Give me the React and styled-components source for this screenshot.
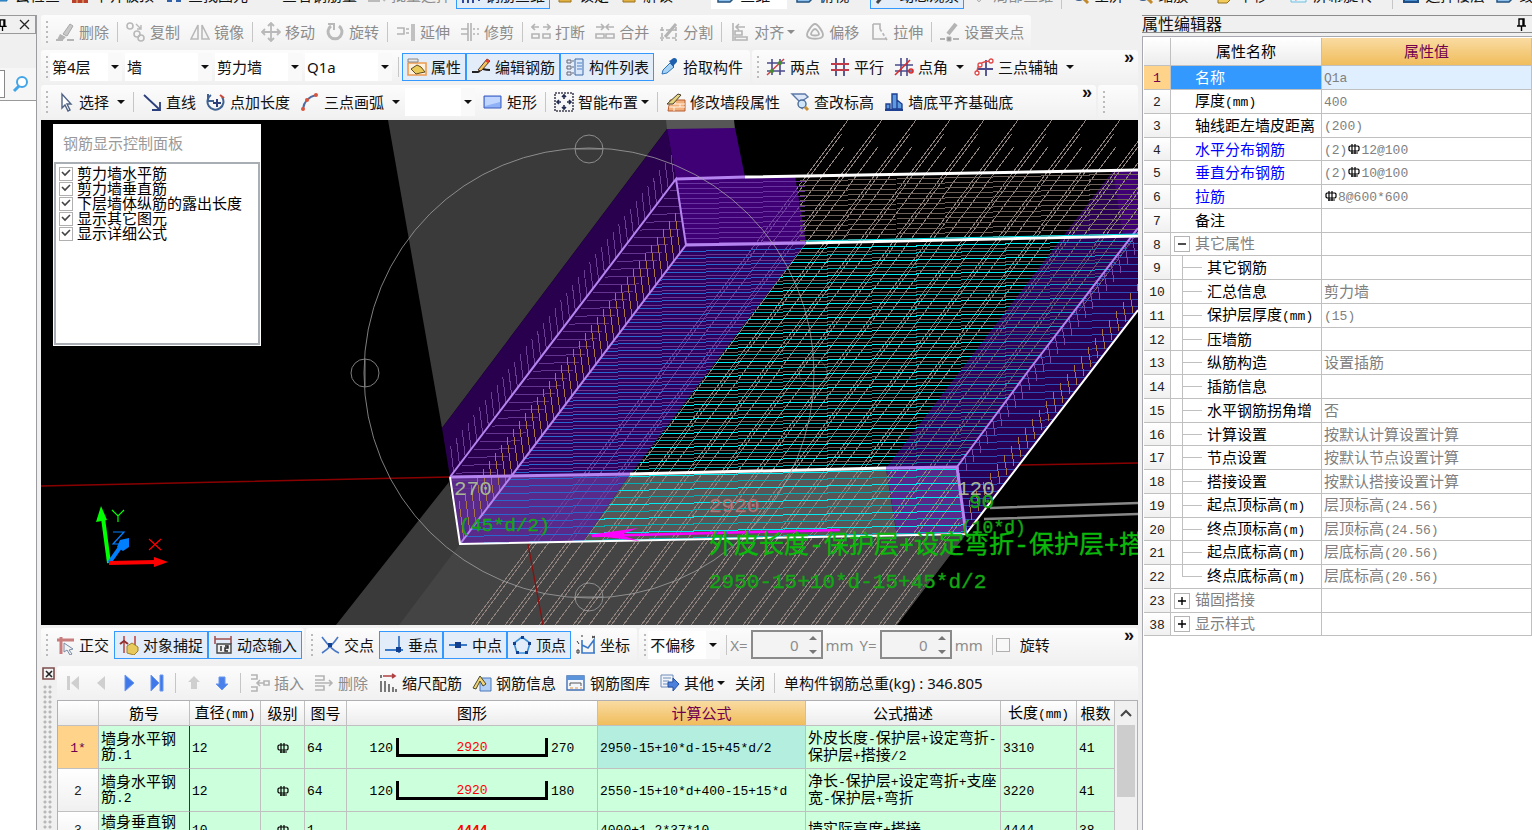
import React from 'react'
import styled, { createGlobalStyle, css } from 'styled-components'

const range = (n) => Array.from({ length: n }, (_, i) => i)

/* ---------- icons ---------- */

const line = { fill: 'none', strokeWidth: 2 }

const icons = {
  none: null,
  blueBox: <path d="M2 4h14v12H2z" fill="#3c9be0" stroke="#1f6fb0" />,
  bricks: <g><path d="M2 2h16v16H2z" fill="#b8402c" /><path d="M2 7h16M2 12h16M7 2v16M13 7v11" stroke="#f0c878" /></g>,
  binoculars: <path d="M3 5h5v12H3zM12 5h5v12h-5zM8 8h4v4H8z" fill="#2f5fa8" />,
  batch: <path d="M2 4h8v12H2zM12 10l6 6M12 10v7M12 10h6" {...line} stroke="#bbb" />,
  rebar3d: <path d="M2 2v16M7 2v16M12 2v16M0 6h16M0 12h16M18 2v14" {...line} stroke="#33489a" />,
  lock: <path d="M4 8h12v9H4z" fill="#e0b040" stroke="#9c7420" />,
  cube: <path d="M2 5l4-3h12v11l-4 4H2z" fill="#8fc1ee" stroke="#23527c" strokeWidth="1.5" />,
  orbit: <g><circle cx="11" cy="8" r="6" fill="#9fd0b8" stroke="#3c8060" /><path d="M2 18l6-7" stroke="#444" strokeWidth="3" /></g>,
  grayCube: <path d="M3 10l7-6 7 6-7 7z" fill="#d8d8d8" stroke="#b4b4b4" />,
  lens: <g><circle cx="9" cy="9" r="6" fill="#bfe0f8" stroke="#3a5c8a" strokeWidth="2" /><path d="M13 13l5 5" stroke="#c08a2c" strokeWidth="3" /></g>,
  hand: <path d="M4 18V9l5-4 8 4v5l-4 4z" fill="#f2cc5c" stroke="#94701c" />,
  spin: <g><path d="M2 2h15v15H2z" fill="#e6f4fb" stroke="#6cc0e0" /><path d="M6 14c7-1 7-5 7-9" stroke="#e23c4c" strokeWidth="3" fill="none" /></g>,
  layers: <path d="M3 3h14v14H3zM3 8h14M3 13h14" fill="#4a8fd0" stroke="#1f4f86" strokeWidth="2" />,

  erase: <g><path d="M8 12l7-10 3 2-6 10z" fill="#c8c8c8" stroke="#a8a8a8" /><path d="M5 12l6 3-3 3H2z" fill="#b4b4b4" /><path d="M1 18h7M12 18h7" stroke="#b5b5b5" strokeWidth="2" /></g>,
  copy: <g fill="none" stroke="#b9b9b9" strokeWidth="1.6"><circle cx="4" cy="4" r="3" /><circle cx="11" cy="12" r="3" /><circle cx="15" cy="16" r="3" /><path d="M10 2l5 5M15 3v4h-4" strokeWidth="1.4" /></g>,
  mirror: <g fill="none" stroke="#b9b9b9" strokeWidth="1.6"><path d="M8 3v14H1zM12 3v14h7z" /></g>,
  move: <path d="M10 1v18M1 10h18M7 4l3-3 3 3M7 16l3 3 3-3M4 7l-3 3 3 3M16 7l3 3-3 3" fill="none" stroke="#b9b9b9" strokeWidth="1.8" />,
  rotate: <g fill="none" stroke="#b9b9b9" strokeWidth="3"><path d="M6 4a7 7 0 1 0 8 0" /><path d="M3 2h6v6" strokeWidth="2" /></g>,
  extend: <g fill="none" stroke="#b4b4b4" strokeWidth="1.6"><path d="M1 6h7v6H1M10 7h3M10 11h3" /><path d="M16 2v17M18 2v17" /></g>,
  trim: <g fill="none" stroke="#b4b4b4" strokeWidth="1.6"><path d="M1 7h7M1 12h7M8 1v18M11 1v18M13 7h2M17 7h2M13 12h2M17 12h2" /></g>,
  breakLine: <g fill="none" stroke="#b4b4b4" strokeWidth="1.6"><path d="M1 12h7v4H1zM12 12h7v4h-7zM1 5h7M12 5h7M4 2L1 5l3 3M16 2l3 3-3 3" /></g>,
  join: <g fill="none" stroke="#b4b4b4" strokeWidth="1.6"><path d="M1 12h8v4H1zM11 12h8v4h-8zM1 5h7M12 5h7M6 2l3 3-3 3M14 2l-3 3 3 3" /></g>,
  split: <g fill="none" stroke="#b4b4b4" strokeWidth="1.6"><path d="M1 8h18M1 16h18M3 5v14M17 5v14" strokeDasharray="4 2" /><path d="M6 15L17 2" strokeWidth="3" /></g>,
  align: <g fill="none" stroke="#b4b4b4" strokeWidth="1.6"><path d="M3 1v18M6 5h9M9 2L6 5l3 3M5 9h7v4H5zM5 15h12v3H5z" /></g>,
  offset: <g fill="none" stroke="#b4b4b4" strokeWidth="1.8"><path d="M10 2c3 0 8 8 8 11 0 5-16 5-16 0C2 10 7 2 10 2z" /><path d="M10 7c2 0 4 4 4 5 0 2-8 2-8 0 0-1 2-5 4-5z" /></g>,
  stretch: <g fill="none" stroke="#b4b4b4" strokeWidth="1.6"><path d="M4 2h7v5M4 2v15h13" /><path d="M11 7l7 11" strokeDasharray="3 2" /></g>,
  grip: <g stroke="#b4b4b4"><path d="M8 12l8-10" strokeWidth="4" /><path d="M0 17h5M13 17h6" strokeWidth="2" /><path d="M7 15h4v4H7z" fill="#999" /></g>,

  props: <g><path d="M1 6h18v12H1z" fill="#fff0dc" stroke="#ee9c50" strokeWidth="1.6" /><path d="M1 2h10v3H1z" fill="#e9e9e9" stroke="#888" /><path d="M4 12l6-4 4 2 4 5-5 1-4 1z" fill="#eacb5a" stroke="#5c4a20" /></g>,
  editRebar: <g><path d="M1 15h6c2 0 2-4 5-3s4 1 7 1" {...line} stroke="#222" /><path d="M7 13l9-11 3 2-9 10z" fill="#f4c45a" stroke="#55382c" /><path d="M15 3l3 2" stroke="#e04030" strokeWidth="3" /></g>,
  list: <g><path d="M10 2h8v16h-8z" fill="#d8e8fa" stroke="#3c68a8" /><path d="M12 6h5M12 9h5M12 12h5" stroke="#4f81c4" /><path d="M2 3h4v3H2zM2 9h4v3H2zM2 15h4v3H2zM7 4h2M7 10h2M7 16h2" fill="none" stroke="#667" /></g>,
  dropper: <g><path d="M3 17l1-4 7-7 4 4-7 6z" fill="#a6d2f6" stroke="#3074b8" /><path d="M10 4l2-1 1-1c3-3 7 1 4 4l-2 2v3z" fill="#1e5fae" /></g>,
  twoPoint: <g><path d="M6 2v16M14 2v16M1 6h18M1 14h18" stroke="#4a4a8c" strokeWidth="1.6" /><path d="M1 18L18 2" stroke="#d04040" strokeWidth="1.5" /><circle cx="6" cy="14" r="2" fill="#3f8f2f" /><circle cx="14" cy="6" r="2" fill="#3f8f2f" /></g>,
  parallel: <g><path d="M6 1v18M14 1v18" stroke="#4a4a8c" strokeWidth="1.8" /><path d="M1 7h18M1 13h18" stroke="#c03a4a" strokeWidth="1.8" /></g>,
  angle: <g><path d="M7 1v18M13 1v18M1 8h18M1 14h18" stroke="#4a4a8c" strokeWidth="1.6" /><path d="M1 18L16 3" stroke="#d82c2c" strokeWidth="1.6" /><circle cx="17" cy="14" r="2" fill="none" stroke="#d82c2c" strokeWidth="1.6" /></g>,
  axis3: <g><path d="M12 3v16M4 12h15" stroke="#4a4a8c" strokeWidth="1.8" /><path d="M3 16c0-8 4-12 15-12" fill="none" stroke="#e04848" strokeWidth="1.6" /><g fill="#fff" stroke="#e04848" strokeWidth="1.3"><circle cx="3" cy="16" r="2" /><circle cx="6" cy="8" r="2" /><circle cx="17" cy="4" r="2" /></g></g>,

  pointer: <path d="M7 2v14l3-3 3 6 2-1-3-6h4z" fill="#fff" stroke="#4f6484" strokeWidth="1.4" />,
  lineTool: <g stroke="#2b3f7c" strokeWidth="1.8" fill="none"><path d="M2 3l15 14" /><path d="M18 10v8h-8" /></g>,
  pointLen: <g fill="none" strokeWidth="2"><path d="M5 3a8 8 0 1 0 11 2" stroke="#3f6292" /><path d="M2 2v7h6" stroke="#3f6292" /><path d="M11 7v8M7 11h8" stroke="#2c3f7c" /><path d="M14 3l4 3" stroke="#c84a3c" /></g>,
  arc: <g><path d="M3 17C4 9 8 5 16 3" fill="none" stroke="#4f6ca0" strokeWidth="2" /><circle cx="3" cy="17" r="2" fill="#d8543c" /><circle cx="7" cy="8" r="2" fill="#d8543c" /><circle cx="16" cy="3" r="2" fill="#d8543c" /></g>,
  rect: <g><path d="M1 4h17v12H1z" fill="#8fb2f6" stroke="#3c5ac0" /><path d="M2 5h15v5L2 14z" fill="#c0d6ff" /></g>,
  smart: <g><path d="M1 1h18v18H1z" fill="none" stroke="#445" strokeDasharray="2 1" strokeWidth="1.6" /><path d="M10 3v4M10 13v4M3 10h4M13 10h4M8 5l2-2 2 2M8 15l2 2 2-2M5 8l-2 2 2 2M15 8l2 2-2 2" fill="none" stroke="#222b50" strokeWidth="1.6" /></g>,
  wallProps: <g><path d="M4 8h15v11H2z" fill="#f2b07c" stroke="#b85c30" /><path d="M3 12h16M3 15h16M9 8v4M14 12v3M8 15v4" stroke="#fff3e4" /><path d="M1 12L12 2l3 1-8 9z" fill="#e4d480" stroke="#4a4030" /></g>,
  checkElev: <g><path d="M2 2h13l3 3-6 4v7l-3-3V9z" fill="#dce8f8" stroke="#5c78a8" strokeWidth="1.4" /><circle cx="12" cy="12" r="4" fill="#cfe6f8" stroke="#4c6c98" strokeWidth="1.4" /><path d="M15 15l3 3" stroke="#c89030" strokeWidth="3" /></g>,
  wallBase: <g><path d="M8 2h5v15H8zM2 12h4v5H2zM13 8l5 4v5h-5z" fill="#5d9ae0" stroke="#1f3f90" strokeWidth="1.4" /><path d="M1 18h18" stroke="#1f3f90" strokeWidth="2" /></g>,

  ortho: <g><path d="M2 5h17M6 2v17" stroke="#c87c7c" strokeWidth="3" /><path d="M9 8l9 6-4 1 3 4-2 1-3-5-3 2z" fill="#f3f3f3" stroke="#788aa4" /></g>,
  snap: <g><path d="M5 1v17M16 1v9" stroke="#c04848" strokeWidth="1.6" /><path d="M1 9l4-3 4 3" fill="none" stroke="#903030" strokeWidth="2" /><path d="M8 18v-7l5-3 6 4v4l-4 4z" fill="#e8c95c" stroke="#9c8030" /></g>,
  dynInput: <g><path d="M2 1v8M18 1v8M2 4h16" stroke="#a05050" strokeWidth="1.6" /><path d="M4 9h14v9H4z" fill="#eee" stroke="#444" strokeWidth="1.4" /><path d="M8 11v5M12 11h3v2h-3v3h3" fill="none" stroke="#222" strokeWidth="1.4" /></g>,
  cross: <g><path d="M2 2c3 4 9 13 17 16M18 2C14 8 8 14 2 18" fill="none" stroke="#4a78c8" strokeWidth="1.6" /><path d="M8 8h4v4H8z" fill="#123f90" /></g>,
  perp: <g><path d="M1 15h18M15 1v17" stroke="#3a78c8" strokeWidth="1.8" /><path d="M12 12h5v5h-5z" fill="#123f90" /></g>,
  middle: <g><path d="M1 10h18" stroke="#3a78c8" strokeWidth="2" /><path d="M7 7h6v6H7z" fill="#123f90" /></g>,
  vertex: <g><path d="M10 2l8 6-3 10H5L2 8z" fill="none" stroke="#3a8ed8" strokeWidth="1.6" /><path d="M9 1h3v3H9zM1 7h3v3H1zM16 7h3v3h-3zM4 16h3v3H4zM13 16h3v3h-3z" fill="#123f90" /></g>,
  coord: <g><path d="M6 5v13h13M6 10l6 3 6-8v13" fill="none" stroke="#3a78c8" strokeWidth="1.6" /><path d="M5 1h2M16 1l3 2M16 3l3-2M1 6l2 3M1 15h2v3H1z" stroke="#333" fill="none" /></g>,

  first: <path d="M4 3h3v14H4zM16 3v14L8 10z" fill="#cfcfcf" />,
  prev: <path d="M14 3v14L6 10z" fill="#cfcfcf" />,
  next: <path d="M6 2v16l9-8z" fill="#3f78e8" stroke="#6c98f0" />,
  last: <path d="M4 2v16l8-8zM13 2h3v16h-3z" fill="#3f78e8" stroke="#6c98f0" />,
  up: <path d="M10 3l6 6h-3v7H7V9H4z" fill="#cfcfcf" />,
  down: <path d="M10 17l6-6h-3V4H7v7H4z" fill="#4a80ea" stroke="#6c98f0" />,
  insert: <g fill="none" stroke="#b4b4b4" strokeWidth="1.6"><path d="M1 2h6v4H1M1 14h6v4H1M8 10h6M10 7l-3 3 3 3M14 8h5v4h-5z" /></g>,
  remove: <g fill="none" stroke="#b4b4b4" strokeWidth="1.6"><path d="M1 3h9v4H1M1 13h9v4H1M1 10h17M15 7l3 3-3 3" /></g>,
  scale: <g fill="none"><path d="M3 2v3M3 8v11M7 8v11M11 11v8M15 14v5M18 16v3" stroke="#444" strokeWidth="1.4" /><path d="M5 3h12M14 1l3 2-3 2" stroke="#b04040" strokeWidth="1.6" /></g>,
  info: <g><path d="M8 5h11v13H8z" fill="#b4d0f4" stroke="#4a78bc" /><path d="M1 15L8 3l6 8-3 2-3-5-4 8z" fill="#f2d470" stroke="#4a4a30" /></g>,
  gallery: <g><path d="M1 3h17v14H1z" fill="#f3f7fd" stroke="#3f6eb4" strokeWidth="1.4" /><path d="M1 3h17v4H1z" fill="#5c94dc" /><path d="M4 13v-3h11v3" fill="none" stroke="#555" /><path d="M4 15h3M9 15h3M14 15h2" stroke="#e09040" /></g>,
  more: <g><path d="M1 2h12v12H1z" fill="#f1f5fb" stroke="#6f8cb8" /><path d="M3 5h8M3 8h6M3 11h5" stroke="#6f8cb8" /><path d="M8 9h5V5l6 6-6 7v-4H8z" fill="#4a80dc" stroke="#2450a4" /></g>,
}

const Glyph = styled.svg`
  width: 20px;
  height: 20px;
  flex: none;
`

const Icon = ({ name }) => <Glyph viewBox="0 0 20 20">{icons[name]}</Glyph>

const CaretSvg = styled.svg`
  width: 8px;
  height: 6px;
  flex: none;
  margin-left: ${(p) => (p.$far ? 8 : 3)}px;
`

const Caret = ({ far }) => (
  <CaretSvg $far={far} viewBox="0 0 8 6">
    <path d="M0 1h8L4 5z" fill="currentColor" />
  </CaretSvg>
)

/* steel grade mark shown in front of bar diameters */
const GradeSvg = styled.svg`
  width: 12px;
  height: 12px;
  margin: 0 1px;
  vertical-align: -1px;
`

const Grade = () => (
  <GradeSvg viewBox="0 0 12 12">
    <path d="M2 3h8l1 1v3l-1 1H2L1 7V4zM4 1v10M7 1v10M3 10h7" fill="none" stroke="#000" strokeWidth="1.2" />
  </GradeSvg>
)

/* ---------- toolbar parts ---------- */

const Tool = styled.button`
  display: flex;
  align-items: center;
  flex: none;
  height: 28px;
  padding: 0 ${(p) => (p.$bare ? 3 : 4)}px;
  border: 1px solid transparent;
  background: transparent;
  font: inherit;
  color: #111;
  white-space: nowrap;
  svg + span {
    margin-left: 4px;
  }
  &:disabled {
    color: #8c8c8c;
  }
  ${(p) =>
    p.$on &&
    css`
      background: #e2edf9;
      border-color: #3399ff;
    `}
`

const ToolButton = ({ icon, label, title, on, disabled, menu, split }) => (
  <Tool type="button" $on={on} $bare={!label} disabled={disabled} aria-label={title} aria-pressed={on}>
    {icon && <Icon name={icon} />}
    {label && <span>{label}</span>}
    {(menu || split) && <Caret far={split} />}
  </Tool>
)

const Bar = styled.div`
  display: flex;
  align-items: center;
  flex: ${(p) => (p.$grow ? '1 1 0' : 'none')};
  min-width: 0;
  height: 33px;
  padding-right: ${(p) => (p.$grow ? 4 : 2)}px;
  border-radius: 3px;
  background: linear-gradient(#fcfcfc, #f1f1f1);
`

const BarRow = styled.div`
  display: flex;
  gap: 2px;
  flex: none;
  margin-bottom: 2px;
`

const Grip = styled.span`
  flex: none;
  width: 2px;
  height: 22px;
  margin: 0 2px 0 5px;
  background: repeating-linear-gradient(#bbb 0 2px, transparent 2px 5px);
`

const Sep = styled.span`
  flex: none;
  width: 1px;
  height: 20px;
  margin: 0 3px;
  background: #c6c6c6;
`

const More = styled.button`
  align-self: flex-start;
  margin-left: auto;
  padding: 0;
  border: none;
  background: none;
  font: bold 18px/14px 'Liberation Sans', sans-serif;
  color: #111;
`

const ComboBox = styled.div`
  display: flex;
  align-items: center;
  flex: none;
  width: ${(p) => p.$width || 87}px;
  height: 28px;
  margin-right: 3px;
  background: #fff;
  select {
    flex: 1;
    min-width: 0;
    height: 28px;
    padding: 0 2px;
    border: none;
    appearance: none;
    background: transparent;
    font: inherit;
    color: #111;
  }
`

const ComboArrow = styled.span`
  display: flex;
  align-items: center;
  width: 14px;
  height: 28px;
  background: #f9f9f9;
  pointer-events: none;
`

const Combo = ({ value, label, width }) => (
  <ComboBox $width={width}>
    <select aria-label={label}>
      <option>{value}</option>
    </select>
    <ComboArrow>
      <Caret />
    </ComboArrow>
  </ComboBox>
)

const Field = styled.label`
  display: flex;
  align-items: center;
  gap: 3px;
  margin-right: 6px;
  color: #8c8c8c;
`

const NumberBox = styled.span`
  display: flex;
  align-items: center;
  width: 72px;
  height: 29px;
  box-sizing: border-box;
  border: 2px solid #8a8a8a;
  background: #f3f3f3;
  input {
    flex: 1;
    min-width: 0;
    padding: 0;
    border: none;
    background: transparent;
    font: inherit;
    color: #8c8c8c;
    text-align: right;
  }
  svg {
    width: 8px;
    height: 20px;
    margin: 0 4px 0 10px;
  }
`

const NumberField = ({ name }) => (
  <Field>
    {name}=
    <NumberBox>
      <input type="text" inputMode="numeric" defaultValue="0" />
      <svg viewBox="0 0 8 20">
        <path d="M0 5l4-4 4 4zM0 15l4 4 4-4z" fill="#777" />
      </svg>
    </NumberBox>
    mm
  </Field>
)

const Check = styled.label`
  display: flex;
  align-items: center;
  gap: 10px;
  color: #111;
  input {
    appearance: none;
    width: 14px;
    height: 14px;
    margin: 0;
    border: 1px solid #b0b0b0;
    background: #f8f8f8;
  }
`

const Total = styled.span`
  padding: 0 5px;
  white-space: nowrap;
`

/* ---------- model view ---------- */

const slant = 0.746
const pts = (list) => list.map((p) => p.join(',')).join(' ')

const wallTop = [676, 179]
const wallRun = [-226, 298]

const diagonals = range(14).flatMap((i) => {
  const x = 848 + i * 34
  return [
    [x, 120],
    [x + 4, 134],
    [x + 16, 147],
  ].map(([x0, y0]) => ({ x1: x0 - (y0 - 120) * slant, y1: y0, x2: x0 - 505 * slant, y2: 625 }))
})

const SceneSvg = styled.svg`
  display: block;
  width: 100%;
  height: 100%;
`

const Scene = () => (
  <SceneSvg viewBox="41 120 1097 505" preserveAspectRatio="xMinYMin slice">
    <defs>
      <clipPath id="leftPart">
        <polygon points={pts([[686, 245], [806, 243], [630, 475], [583, 542], [460, 544]])} />
      </clipPath>
      <clipPath id="midPart">
        <polygon points={pts([[806, 243], [1138, 235], [1029, 370], [957, 467], [966, 534], [583, 542], [630, 475]])} />
      </clipPath>
      <clipPath id="rightPart">
        <polygon points={pts([[1138, 228], [1138, 310], [966, 534], [957, 467]])} />
      </clipPath>
      <clipPath id="backPart">
        <polygon points={pts([[676, 179], [1138, 170], [1138, 236], [686, 245]])} />
      </clipPath>
      <clipPath id="sidePart">
        <polygon points={pts([[676, 179], [686, 245], [460, 544], [450, 477]])} />
      </clipPath>
      <clipPath id="openPart">
        <polygon
          points={pts([[790, 120], [1138, 120], [1138, 236], [957, 467], [960, 534], [897, 625], [400, 625], [460, 544], [583, 542], [630, 475], [806, 243], [795, 176]])}
        />
      </clipPath>
      <clipPath id="tintPart">
        <polygon points={pts([[745, 177], [795, 176], [806, 243], [630, 475], [583, 542], [460, 544]])} />
      </clipPath>
    </defs>

    <rect x="41" y="120" width="1097" height="505" fill="#000" />

    {/* shaded planes */}
    <polygon points={pts([[388, 120], [672, 120], [667, 129], [442, 428]])} fill="#3a3a3a" />
    <polygon points={pts([[666, 120], [734, 120], [735, 129], [667, 129]])} fill="#565656" />
    <polygon points={pts([[449, 482], [460, 544], [966, 534], [897, 625], [336, 625]])} fill="#3a3a3a" />
    <polygon points={pts([[460, 544], [966, 534], [897, 625], [399, 625]])} fill="#444" />

    {/* axis lines */}
    <path d="M41 486L450 477M1020 465L1138 463" stroke="#8a0000" strokeWidth="1.5" />
    <path d="M990 508L1138 503M984 519L1138 514" stroke="#888" strokeWidth="2.5" />

    {/* walls */}
    <polygon points={pts([[667, 129], [676, 179], [450, 477], [442, 428]])} fill="#28004e" />
    <polygon points={pts([[676, 179], [686, 245], [460, 544], [450, 477]])} fill="#28004e" />
    <polygon points={pts([[667, 129], [735, 128], [745, 177], [795, 176], [806, 243], [686, 245], [676, 179]])} fill="#3e0074" />
    <polygon points={pts([[686, 245], [806, 243], [630, 475], [510, 477]])} fill="#2e0060" />
    <polygon points={pts([[1113, 171], [1138, 170], [1138, 310], [966, 534], [957, 467], [886, 468]])} fill="#2a0055" />
    <polygon points={pts([[1113, 171], [1138, 170], [1138, 234], [1123, 236]])} fill="#3e0074" />
    <polygon points={pts([[450, 477], [630, 474], [583, 542], [460, 544]])} fill="#592a8a" />
    <polygon points={pts([[630, 474], [886, 468], [897, 536], [583, 542]])} fill="#575757" />
    <polygon points={pts([[886, 468], [957, 467], [966, 534], [897, 536]])} fill="#592a8a" />

    <g shapeRendering="crispEdges">
      {/* diagonal bars */}
      <g clipPath="url(#openPart)" stroke="#8e807a">
        {diagonals.map((d, i) => (
          <line key={i} {...d} />
        ))}
      </g>
      <g clipPath="url(#tintPart)" stroke="#6a3e98">
        {diagonals.map((d, i) => (
          <line key={i} {...d} />
        ))}
      </g>

      {/* back wall bars */}
      <g clipPath="url(#backPart)">
        {range(13).map((i) => (
          <g key={i}>
            <path d={`M676 ${184 + i * 5}L806 ${181 + i * 5}`} stroke="#6a34a0" />
            <path d={`M800 ${181 + i * 5}L1138 ${174 + i * 5}`} stroke="#6e615a" />
          </g>
        ))}
      </g>

      {/* horizontal bars */}
      <g clipPath="url(#leftPart)">
        {range(42).map((i) => (
          <g key={i}>
            <path d={`M440 ${257 + i * 7}L840 ${248 + i * 7}`} stroke="#2868cc" />
            {i < 31 && <path d={`M440 ${261 + i * 7}L840 ${252 + i * 7}`} stroke="#6a3890" />}
          </g>
        ))}
      </g>
      <g clipPath="url(#midPart)">
        {range(42).map((i) => (
          <g key={i}>
            {i < 31 && <path d={`M560 ${258 + i * 7}L1140 ${245 + i * 7}`} stroke="#6a5c56" />}
            <path d={`M560 ${254 + i * 7}L1140 ${241 + i * 7}`} stroke={i % 2 ? '#00b0b4' : '#00ecf0'} />
          </g>
        ))}
      </g>
      <polygon points={pts([[1064, 236], [1138, 235], [957, 467], [886, 468]])} fill="#32006c" opacity="0.35" />
      <g clipPath="url(#rightPart)">
        {range(48).map((i) => (
          <path key={i} d={`M950 ${240 + i * 7}L1140 ${236 + i * 7}`} stroke="#2a50b8" />
        ))}
        {range(26).map((i) => {
          const x = 972 + i * 7
          const y = 520 - i * 9
          return (
            <g key={i}>
              <path d={`M${x} ${y}l-3 -20`} stroke="#a87448" />
              <path d={`M${x - 12} ${y - 40}l-3 -20`} stroke="#7a4aa8" />
            </g>
          )
        })}
      </g>

      {/* side wall bars */}
      <g clipPath="url(#sidePart)">
        {range(40).map((i) => {
          const x = wallTop[0] + (wallRun[0] * i) / 38
          const y = wallTop[1] + (wallRun[1] * i) / 38
          return <path key={i} d={`M${x} ${y + 4}l40 -1`} stroke="#643490" />
        })}
        {range(40).map((i) => (
          <g key={i}>
            <path d={`M${686 - i * 6} ${245 + i * 8}l-5 -40`} stroke="#a87448" />
            <path d={`M${686 - i * 6} ${245 + i * 8}l-1 -8`} stroke="#2a8ad8" />
          </g>
        ))}
      </g>
      {range(39).map((i) => {
        const x = 674 - i * 5.8
        const y = 181 + i * 7.65
        return <path key={i} d={`M${x} ${y}l-3 -26`} stroke="#6a3c94" />
      })}
    </g>

    {/* edges */}
    <g fill="none" stroke="#b684f0" strokeWidth="2">
      <path d="M450 477L676 179L686 245L460 544" />
      <path d="M676 179L745 177M686 245L806 243M450 477L630 474M886 468L957 467L966 534" strokeWidth="3" />
      <path d="M957 467L1029 370L1138 228" />
    </g>
    <g fill="none" stroke="#fff" strokeWidth="3">
      <path d="M745 177L1138 170M806 243L1138 236M630 474L886 468" />
      <path d="M450 477L460 544L966 534L1138 310" strokeWidth="2" />
    </g>
    <path d="M806 241L1138 234" stroke="#00e4ea" />

    {/* orbit ring */}
    <g fill="none" stroke="#a8a8a8" opacity="0.75">
      <circle cx="589" cy="373" r="225" />
      <circle cx="589" cy="149" r="14" />
      <circle cx="589" cy="597" r="14" />
      <circle cx="365" cy="373" r="14" />
      <circle cx="813" cy="373" r="14" opacity="0.5" />
      <path d="M575 149h28M575 597h28M365 359v28" />
    </g>
    <path d="M528 544L543 625" stroke="#8a1010" strokeWidth="1.3" />

    {/* selected bar */}
    <path d="M592 536L840 530" stroke="#ff00ff" strokeWidth="2.5" />
    <path d="M588 535l50 -7l-18 7l20 6z" fill="#ff00ff" />

    {/* dimension texts */}
    <g fontFamily="'Liberation Mono', monospace" fontSize="21">
      <text x="454" y="495" fill="#a9b894">270</text>
      <text x="957" y="495" fill="#a9b894">120</text>
      <text x="709" y="512" fill="#8f8f8f" stroke="#c05050" strokeWidth="0.5">2920</text>
      <g fill="#14a514" stroke="#14a514" strokeWidth="0.4">
        <text x="459" y="531" fontSize="19">(45*d/2)</text>
        <text x="969" y="508">90</text>
        <text x="961" y="533" fontSize="18">(10*d)</text>
        <text x="709" y="588">2950-15+10*d-15+45*d/2</text>
      </g>
      <text
        x="709"
        y="553"
        fontSize="25"
        fill="#0bb80b"
        stroke="#0bb80b"
        strokeWidth="0.4"
        fontFamily="'Liberation Mono', 'Noto Sans CJK SC', sans-serif"
      >
        外皮长度-保护层+设定弯折-保护层+搭接/2
      </text>
    </g>

    {/* coordinate axes */}
    <g strokeWidth="4">
      <path d="M109 563L103 518" stroke="#0f0" />
      <path d="M101 506l-5 16l11 -2z" fill="#0f0" />
      <path d="M109 563L121 546" stroke="#0080ff" />
      <path d="M129 538l-9 2l-3 7l6 4l6 -4z" fill="#0080ff" />
      <path d="M109 563L156 562" stroke="#f00" />
      <path d="M168 562l-14 -5v10z" fill="#f00" />
    </g>
    <g fill="none" strokeWidth="1.2">
      <path d="M112 510l6 6l6 -6M118 516v6" stroke="#0f0" />
      <path d="M113 532h11l-11 12h11" stroke="#0080ff" />
      <path d="M149 539l12 11M161 539l-12 11" stroke="#f00" />
    </g>
  </SceneSvg>
)

const View = styled.main`
  position: relative;
  flex: 1 1 0;
  min-height: 0;
  overflow: hidden;
  background: #000;
`

const FloatPanel = styled.section`
  position: absolute;
  left: 12px;
  top: 4px;
  display: flex;
  flex-direction: column;
  width: 208px;
  height: 222px;
  box-sizing: border-box;
  padding: 0 1px 1px;
  background: #fff;
  h2 {
    margin: 0;
    padding: 0 9px;
    font-size: 15px;
    font-weight: normal;
    line-height: 38px;
    color: #999;
  }
`

const CheckList = styled.div`
  flex: 1;
  padding: 2px 3px;
  border: 2px solid #a9aeb4;
  line-height: 15px;
  color: #000;
  label {
    display: flex;
    align-items: center;
    gap: 4px;
    height: 15px;
    white-space: nowrap;
  }
  input {
    appearance: none;
    width: 14px;
    height: 14px;
    margin: 0;
    border: 1px solid #b0b0b0;
    background: #fff;
  }
  span {
    margin-left: -18px;
  }
  svg {
    width: 14px;
    height: 14px;
    pointer-events: none;
  }
`

const displayOptions = ['剪力墙水平筋', '剪力墙垂直筋', '下层墙体纵筋的露出长度', '显示其它图元', '显示详细公式']

const DisplayPanel = () => (
  <FloatPanel>
    <h2>钢筋显示控制面板</h2>
    <CheckList>
      {displayOptions.map((text) => (
        <label key={text}>
          <input type="checkbox" defaultChecked />
          <span>
            <svg viewBox="0 0 14 14">
              <path d="M3 6l3 3 5-5" fill="none" stroke="#444" strokeWidth="1.6" />
            </svg>
          </span>
          {text}
        </label>
      ))}
    </CheckList>
  </FloatPanel>
)

/* ---------- tables ---------- */

const Half = styled.span`
  font-family: 'Liberation Mono', monospace;
  font-size: 13px;
`

/* latin parts are set in a half width face; # stands for the steel grade mark */
const Mixed = ({ text }) =>
  text.split(/(#|[\x20-\x22\x24-\x7e]+)/).map((part, i) => {
    if (part === '#') return <Grade key={i} />
    return i % 2 ? <Half key={i}>{part}</Half> : part
  })

const headFill = css`
  background: linear-gradient(#fff, #ececec);
`

const hotFill = css`
  background: linear-gradient(#f9dba2, #f0bd5c);
  color: #700050;
`

const Grid = styled.table`
  width: 100%;
  border-collapse: separate;
  border-spacing: 0;
  table-layout: fixed;
  line-height: 15px;
  th,
  td {
    box-sizing: border-box;
    padding: 0 2px;
    border-right: 1px solid #c0c0c0;
    border-bottom: 1px solid #c0c0c0;
    overflow: hidden;
    white-space: nowrap;
    font-weight: normal;
    text-align: left;
  }
  thead th {
    ${headFill}
    padding: 0;
    text-align: center;
    color: #000;
  }
  thead th.hot {
    ${hotFill}
  }
`

const PropGrid = styled(Grid)`
  thead th {
    height: 28px;
  }
  tbody tr {
    height: 24px;
  }
  tbody tr:nth-child(4n) {
    height: 23px;
  }
  td {
    color: #808080;
  }
  tr.current td {
    background: #e0efff;
  }
`

const RowNo = styled.th`
  && {
    padding: 0;
    text-align: center;
    background: ${(p) => (p.$hot ? '#ffd48a' : 'linear-gradient(#fff, #f0f0f0)')};
    color: ${(p) => (p.$hot ? '#700050' : '#222')};
  }
`

const treeLine = css`
  background-image: linear-gradient(#c0c0c0, #c0c0c0), linear-gradient(#c0c0c0, #c0c0c0);
  background-repeat: no-repeat;
  background-position: 11px 0, 11px 50%;
  background-size: 1px ${(p) => (p.$last ? '50%' : '100%')}, 20px 1px;
`

const NameCell = styled.th`
  && {
    padding: 0 0 0 ${(p) => (p.$kind === 'child' ? 36 : p.$kind ? 3 : 24)}px;
  }
  color: ${(p) => (p.$blue ? '#0000ff' : p.$kind && p.$kind !== 'child' ? '#808080' : '#000')};
  ${(p) => p.$kind === 'child' && treeLine}
  ${(p) =>
    p.$selected &&
    css`
      background: #3399ff;
      color: #fff;
    `}
`

const Toggle = styled.button`
  width: 16px;
  height: 16px;
  margin-right: 5px;
  padding: 0;
  border: 1px solid #b4b4b4;
  background: #fff;
  vertical-align: middle;
  svg {
    display: block;
    width: 14px;
    height: 14px;
  }
`

const properties = [
  { no: 1, name: '名称', value: 'Q1a', selected: true },
  { no: 2, name: '厚度(mm)', value: '400' },
  { no: 3, name: '轴线距左墙皮距离', value: '(200)' },
  { no: 4, name: '水平分布钢筋', value: '(2)#12@100', blue: true },
  { no: 5, name: '垂直分布钢筋', value: '(2)#10@100', blue: true },
  { no: 6, name: '拉筋', value: '#8@600*600', blue: true },
  { no: 7, name: '备注', value: '' },
  { no: 8, name: '其它属性', value: '', kind: 'open' },
  { no: 9, name: '其它钢筋', value: '', kind: 'child' },
  { no: 10, name: '汇总信息', value: '剪力墙', kind: 'child' },
  { no: 11, name: '保护层厚度(mm)', value: '(15)', kind: 'child' },
  { no: 12, name: '压墙筋', value: '', kind: 'child' },
  { no: 13, name: '纵筋构造', value: '设置插筋', kind: 'child' },
  { no: 14, name: '插筋信息', value: '', kind: 'child' },
  { no: 15, name: '水平钢筋拐角增', value: '否', kind: 'child' },
  { no: 16, name: '计算设置', value: '按默认计算设置计算', kind: 'child' },
  { no: 17, name: '节点设置', value: '按默认节点设置计算', kind: 'child' },
  { no: 18, name: '搭接设置', value: '按默认搭接设置计算', kind: 'child' },
  { no: 19, name: '起点顶标高(m)', value: '层顶标高(24.56)', kind: 'child' },
  { no: 20, name: '终点顶标高(m)', value: '层顶标高(24.56)', kind: 'child' },
  { no: 21, name: '起点底标高(m)', value: '层底标高(20.56)', kind: 'child' },
  { no: 22, name: '终点底标高(m)', value: '层底标高(20.56)', kind: 'child', last: true },
  { no: 23, name: '锚固搭接', value: '', kind: 'closed' },
  { no: 38, name: '显示样式', value: '', kind: 'closed' },
]

const Side = styled.aside`
  display: flex;
  flex-direction: column;
  flex: 0 0 390px;
  box-sizing: border-box;
  margin-left: 4px;
`

const SideTitle = styled.header`
  display: flex;
  align-items: center;
  justify-content: space-between;
  height: 16px;
  padding-right: 5px;
  border: solid #8c8c8c;
  border-width: 1px 0;
  h2 {
    margin: 0;
    font-size: 16px;
    font-weight: normal;
    line-height: 16px;
  }
  svg {
    width: 11px;
    height: 14px;
  }
`

const SideBody = styled.div`
  flex: 1;
  margin-top: 3px;
  padding: 1px 0 0 1px;
  border: solid #a8a8b0;
  border-width: 1px 0 0 1px;
  background: #fff;
`

const Pin = () => (
  <svg viewBox="0 0 11 14">
    <path d="M3 2h5v7H3zM7 2v7M1 9h9M5.500 9v5" fill="none" stroke="#000" strokeWidth="1.4" />
  </svg>
)

const PropertyEditor = () => (
  <Side>
    <SideTitle>
      <h2>属性编辑器</h2>
      <Pin />
    </SideTitle>
    <SideBody>
      <PropGrid>
        <colgroup>
          <col width="27" />
          <col width="151" />
          <col />
        </colgroup>
        <thead>
          <tr>
            <th />
            <th>属性名称</th>
            <th className="hot">属性值</th>
          </tr>
        </thead>
        <tbody>
          {properties.map((p) => (
            <tr key={p.no} className={p.selected ? 'current' : undefined}>
              <RowNo $hot={p.selected}>
                <Mixed text={String(p.no)} />
              </RowNo>
              <NameCell $kind={p.kind} $blue={p.blue} $selected={p.selected} $last={p.last}>
                {(p.kind === 'open' || p.kind === 'closed') && (
                  <Toggle type="button" aria-label={p.name}>
                    <svg viewBox="0 0 14 14">
                      <path d={p.kind === 'open' ? 'M3 7h8' : 'M3 7h8M7 3v8'} stroke="#000" strokeWidth="1.4" />
                    </svg>
                  </Toggle>
                )}
                <Mixed text={p.name} />
              </NameCell>
              <td>
                <Mixed text={p.value} />
              </td>
            </tr>
          ))}
        </tbody>
      </PropGrid>
    </SideBody>
  </Side>
)

const BarGrid = styled(Grid)`
  thead th {
    height: 25px;
  }
  tbody tr {
    height: 43px;
  }
  tbody tr:last-child {
    height: 36px;
  }
  td {
    background: #ccffdb;
    color: #000;
  }
  td.name {
    border-right-color: #333;
  }
  td.center {
    text-align: center;
  }
  td.wrap {
    white-space: normal;
  }
  td.hot {
    background: #b4eedf;
  }
`

const Shape = styled.div`
  display: grid;
  grid-template-columns: 1fr 152px 1fr;
  gap: 3px;
  align-items: center;
  span:first-child {
    text-align: right;
  }
`

const Bend = styled.div`
  height: 16px;
  border: 3px solid #000;
  border-top: none;
  color: #f00;
  text-align: center;
`

const Straight = styled.div`
  color: #f00;
  font-weight: bold;
  text-align: center;
`

const bars = [
  { no: '1*', name: '墙身水平钢筋.1', dia: '12', fig: '64', left: '120', mid: '2920', right: '270', formula: '2950-15+10*d-15+45*d/2', desc: '外皮长度-保护层+设定弯折-保护层+搭接/2', len: '3310', count: '41', hot: true },
  { no: '2', name: '墙身水平钢筋.2', dia: '12', fig: '64', left: '120', mid: '2920', right: '180', formula: '2550-15+10*d+400-15+15*d', desc: '净长-保护层+设定弯折+支座宽-保护层+弯折', len: '3220', count: '41' },
  { no: '3', name: '墙身垂直钢筋.1', dia: '10', fig: '1', mid: '4444', formula: '4000+1.2*37*10', desc: '墙实际高度+搭接', len: '4444', count: '38' },
]

const TableArea = styled.div`
  display: flex;
  height: 129px;
  overflow: hidden;
  border: solid #b0b0b4;
  border-width: 1px 1px 0 1px;
  background: #fff;
`

const TableBox = styled.div`
  flex: 1;
  min-width: 0;
`

const ScrollBar = styled.div`
  display: flex;
  flex-direction: column;
  align-items: center;
  flex: 0 0 22px;
  background: #f0f0f0;
  svg {
    width: 12px;
    height: 8px;
    margin: 8px 0;
  }
  span {
    width: 18px;
    height: 72px;
    background: #cdcdcd;
  }
`

const BarTable = () => (
  <TableArea>
    <TableBox>
      <BarGrid>
        <colgroup>
          <col width="41" />
          <col width="91" />
          <col width="71" />
          <col width="44" />
          <col width="42" />
          <col />
          <col width="208" />
          <col width="195" />
          <col width="76" />
          <col width="38" />
        </colgroup>
        <thead>
          <tr>
            <th />
            <th>筋号</th>
            <th><Mixed text="直径(mm)" /></th>
            <th>级别</th>
            <th>图号</th>
            <th>图形</th>
            <th className="hot">计算公式</th>
            <th>公式描述</th>
            <th><Mixed text="长度(mm)" /></th>
            <th>根数</th>
          </tr>
        </thead>
        <tbody>
          {bars.map((b) => (
            <tr key={b.no}>
              <RowNo $hot={b.hot}><Mixed text={b.no} /></RowNo>
              <td className="name wrap"><Mixed text={b.name} /></td>
              <td><Mixed text={b.dia} /></td>
              <td className="center"><Grade /></td>
              <td><Mixed text={b.fig} /></td>
              <td>
                {b.left ? (
                  <Shape>
                    <span><Mixed text={b.left} /></span>
                    <Bend><Mixed text={b.mid} /></Bend>
                    <span><Mixed text={b.right} /></span>
                  </Shape>
                ) : (
                  <Straight><Mixed text={b.mid} /></Straight>
                )}
              </td>
              <td className={b.hot ? 'hot' : undefined}><Mixed text={b.formula} /></td>
              <td className="wrap"><Mixed text={b.desc} /></td>
              <td><Mixed text={b.len} /></td>
              <td><Mixed text={b.count} /></td>
            </tr>
          ))}
        </tbody>
      </BarGrid>
    </TableBox>
    <ScrollBar>
      <svg viewBox="0 0 12 8">
        <path d="M1 7l5-5 5 5" fill="none" stroke="#444" strokeWidth="2" />
      </svg>
      <span />
    </ScrollBar>
  </TableArea>
)

/* ---------- page ---------- */

const GlobalStyle = createGlobalStyle`
  body {
    margin: 0;
    overflow: hidden;
    background: #f0f0f0;
    color: #111;
    font-family: 'Noto Sans', 'Noto Sans CJK SC', sans-serif;
    font-size: 15px;
    line-height: 20px;
  }
`

const Page = styled.div`
  display: flex;
  flex-direction: column;
  height: 100vh;
`

const MainStrip = styled.nav`
  display: flex;
  align-items: flex-end;
  flex: none;
  height: 9px;
  margin: 0 0 6px -14px;
  overflow: hidden;
`

const Space = styled.span`
  flex: none;
  width: ${(p) => p.$w}px;
`

const Work = styled.div`
  display: flex;
  flex: 1;
  min-height: 0;
`

const LeftDock = styled.aside`
  display: flex;
  flex-direction: column;
  flex: 0 0 36px;
  margin-right: 4px;
  border-right: 1px solid #9c9ca0;
`

const DockHead = styled.div`
  display: flex;
  align-items: center;
  justify-content: space-between;
  height: 17px;
  padding: 0 5px 0 0;
  border: 1px solid #999;
  border-left: none;
  svg {
    width: 11px;
    height: 13px;
  }
  svg:first-child {
    margin-left: -3px;
  }
`

const DockSearch = styled.div`
  display: flex;
  align-items: center;
  gap: 6px;
  height: 32px;
  margin-top: 34px;
  background: #f6f6f6;
  input {
    width: 5px;
    height: 28px;
    box-sizing: border-box;
    padding: 0;
    border: 1px solid #888;
    border-left: none;
    background: #fff;
  }
  button {
    display: flex;
    padding: 0;
    border: none;
    background: none;
  }
`

const DockList = styled.div`
  flex: 1;
  border-top: 1px solid #999;
  background: #fff;
`

const Center = styled.div`
  display: flex;
  flex-direction: column;
  flex: 1;
  min-width: 0;
`

const TopBars = styled.div`
  flex: none;
`

const BottomBars = styled.div`
  flex: none;
  padding-top: 3px;
`

const Dock = styled.section`
  display: flex;
  margin-top: 5px;
`

const SnapRow = styled(BarRow)`
  margin-bottom: 0;
`

const NavBar = styled(Bar)`
  margin-bottom: 1px;
  padding-left: 2px;
  ${Sep} {
    margin: 0 4px;
  }
`

const DockGrip = styled.div`
  flex: 0 0 16px;
  svg {
    display: block;
    width: 13px;
    height: 13px;
    margin: 1px 0 5px 1px;
  }
  span {
    display: block;
    width: 9px;
    height: 144px;
    margin-left: 2px;
    background: radial-gradient(circle at 2px 2px, #b8b8b8 1px, transparent 2px) 0 0 / 5px 5px;
  }
`

const DockMain = styled.div`
  flex: 1;
  min-width: 0;
`

function App() {
  return (
    <Page>
      <GlobalStyle />
      <MainStrip>
        <ToolButton icon="blueBox" label="云检查" />
        <ToolButton icon="bricks" label="平齐板顶" />
        <ToolButton icon="binoculars" label="查找图元" />
        <ToolButton icon="none" label="查看钢筋量" />
        <ToolButton icon="batch" label="批量选择" disabled />
        <ToolButton icon="rebar3d" label="钢筋三维" on />
        <ToolButton icon="lock" label="锁定" />
        <ToolButton icon="lock" label="解锁" />
        <Space $w={33} />
        <ComboBox $width={76}>
          <ToolButton icon="cube" label="三维" />
        </ComboBox>
        <ToolButton icon="cube" label="俯视" split />
        <ToolButton icon="orbit" label="动态观察" on />
        <ToolButton icon="grayCube" label="局部三维" disabled />
        <Sep />
        <ToolButton icon="lens" label="全屏" />
        <ToolButton icon="lens" label="缩放" split />
        <ToolButton icon="hand" label="平移" />
        <Space $w={11} />
        <ToolButton icon="spin" label="屏幕旋转" menu />
        <Sep />
        <ToolButton icon="layers" label="选择楼层" />
        <ToolButton icon="cube" label="线框" />
      </MainStrip>

      <Work>
        <LeftDock>
          <DockHead>
            <Pin />
            <svg viewBox="0 0 11 13">
              <path d="M1 2l9 9M10 2l-9 9" stroke="#222" strokeWidth="1.3" />
            </svg>
          </DockHead>
          <DockSearch>
            <input type="text" aria-label="搜索" />
            <button type="button" aria-label="查找">
              <Glyph viewBox="0 0 20 20">
                <circle cx="11" cy="8" r="5" fill="#fff" stroke="#42a5e8" strokeWidth="2" />
                <path d="M8 12l-5 5" stroke="#42a5e8" strokeWidth="3" />
              </Glyph>
            </button>
          </DockSearch>
          <DockList />
        </LeftDock>

        <Center>
          <TopBars>
            <BarRow>
              <Bar>
                <Grip />
                <ToolButton icon="erase" label="删除" disabled />
                <Sep />
                <ToolButton icon="copy" label="复制" disabled />
                <ToolButton icon="mirror" label="镜像" disabled />
                <Sep />
                <ToolButton icon="move" label="移动" disabled />
                <ToolButton icon="rotate" label="旋转" disabled />
                <Sep />
                <ToolButton icon="extend" label="延伸" disabled />
                <ToolButton icon="trim" label="修剪" disabled />
                <Sep />
                <ToolButton icon="breakLine" label="打断" disabled />
                <ToolButton icon="join" label="合并" disabled />
                <ToolButton icon="split" label="分割" disabled />
                <Sep />
                <ToolButton icon="align" label="对齐" disabled menu />
                <ToolButton icon="offset" label="偏移" disabled />
                <ToolButton icon="stretch" label="拉伸" disabled />
                <Sep />
                <ToolButton icon="grip" label="设置夹点" disabled />
              </Bar>
            </BarRow>
            <BarRow>
              <Bar>
                <Grip />
                <Combo value="第4层" label="楼层" width={72} />
                <Combo value="墙" label="构件类型" />
                <Combo value="剪力墙" label="构件" />
                <Combo value="Q1a" label="名称" />
                <Sep />
                <ToolButton icon="props" label="属性" on />
                <ToolButton icon="editRebar" label="编辑钢筋" on />
                <ToolButton icon="list" label="构件列表" on />
                <ToolButton icon="dropper" label="拾取构件" />
              </Bar>
              <Bar $grow>
                <Grip />
                <ToolButton icon="twoPoint" label="两点" />
                <ToolButton icon="parallel" label="平行" />
                <ToolButton icon="angle" label="点角" split />
                <ToolButton icon="axis3" label="三点辅轴" split />
                <More type="button">»</More>
              </Bar>
            </BarRow>
            <BarRow>
              <Bar $grow>
                <Grip />
                <ToolButton icon="pointer" label="选择" split />
                <Sep />
                <ToolButton icon="lineTool" label="直线" />
                <ToolButton icon="pointLen" label="点加长度" />
                <ToolButton icon="arc" label="三点画弧" split />
                <Combo value="" label="画弧方式" width={70} />
                <ToolButton icon="rect" label="矩形" />
                <Sep />
                <ToolButton icon="smart" label="智能布置" menu />
                <Sep />
                <ToolButton icon="wallProps" label="修改墙段属性" />
                <ToolButton icon="checkElev" label="查改标高" />
                <ToolButton icon="wallBase" label="墙底平齐基础底" />
                <More type="button">»</More>
              </Bar>
              <Bar>
                <Grip />
                <Space $w={29} />
              </Bar>
            </BarRow>
          </TopBars>

          <View>
            <Scene />
            <DisplayPanel />
          </View>

          <BottomBars>
            <SnapRow>
              <Bar>
                <Grip />
                <ToolButton icon="ortho" label="正交" />
                <ToolButton icon="snap" label="对象捕捉" on />
                <ToolButton icon="dynInput" label="动态输入" on />
              </Bar>
              <Bar>
                <Grip />
                <ToolButton icon="cross" label="交点" />
                <ToolButton icon="perp" label="垂点" on />
                <ToolButton icon="middle" label="中点" on />
                <ToolButton icon="vertex" label="顶点" on />
                <ToolButton icon="coord" label="坐标" />
              </Bar>
              <Bar $grow>
                <Grip />
                <Combo value="不偏移" label="偏移方式" width={72} />
                <Sep />
                <NumberField name="X" />
                <NumberField name="Y" />
                <Sep />
                <Check>
                  <input type="checkbox" />
                  旋转
                </Check>
                <More type="button">»</More>
              </Bar>
            </SnapRow>
            <Dock>
              <DockGrip>
                <svg viewBox="0 0 13 13">
                  <path d="M1 1h11v11H1z" fill="#f4f4f4" stroke="#7c4c4c" strokeWidth="1.6" />
                  <path d="M4 4l6 6M10 4l-6 6" stroke="#222" strokeWidth="1.6" />
                </svg>
                <span />
              </DockGrip>
              <DockMain>
                <NavBar>
                  <ToolButton icon="first" title="首条" disabled />
                  <ToolButton icon="prev" title="上一条" disabled />
                  <ToolButton icon="next" title="下一条" />
                  <ToolButton icon="last" title="末条" />
                  <Sep />
                  <ToolButton icon="up" title="上移" disabled />
                  <ToolButton icon="down" title="下移" />
                  <Sep />
                  <ToolButton icon="insert" label="插入" disabled />
                  <ToolButton icon="remove" label="删除" disabled />
                  <ToolButton icon="scale" label="缩尺配筋" />
                  <ToolButton icon="info" label="钢筋信息" />
                  <ToolButton icon="gallery" label="钢筋图库" />
                  <ToolButton icon="more" label="其他" menu />
                  <ToolButton label="关闭" />
                  <Sep />
                  <Total>单构件钢筋总重(kg) : 346.805</Total>
                </NavBar>
                <BarTable />
              </DockMain>
            </Dock>
          </BottomBars>
        </Center>

        <PropertyEditor />
      </Work>
    </Page>
  )
}

export default App
